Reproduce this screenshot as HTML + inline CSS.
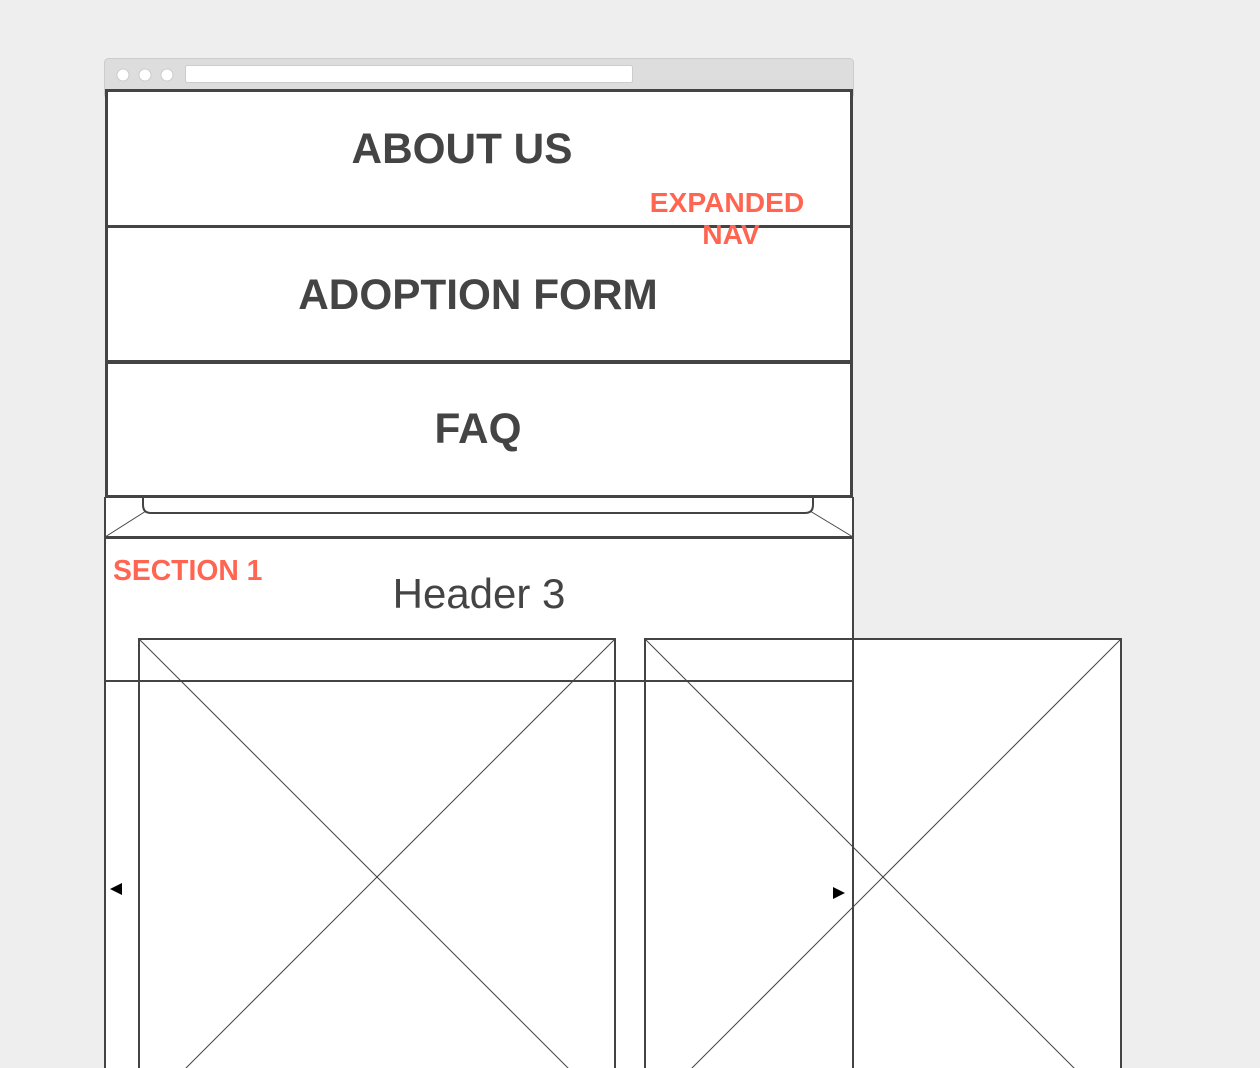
<!DOCTYPE html>
<html><head><meta charset="utf-8"><style>
html,body{margin:0;padding:0;background:#eeeeee;width:1260px;height:1068px;overflow:hidden}
svg{display:block}
text{font-family:"Liberation Sans",Arial,sans-serif}
</style></head><body>
<svg width="1260" height="1068" viewBox="0 0 1260 1068" xmlns="http://www.w3.org/2000/svg">
<rect width="1260" height="1068" fill="#eeeeee"/>
<!-- browser chrome -->
<rect x="104.5" y="58.5" width="749" height="40" rx="4" fill="#dddddd" stroke="#cccccc"/>
<circle cx="123" cy="75" r="6" fill="#fff" stroke="#cccccc"/>
<circle cx="145" cy="75" r="6" fill="#fff" stroke="#cccccc"/>
<circle cx="167" cy="75" r="6" fill="#fff" stroke="#cccccc"/>
<rect x="185.5" y="65.5" width="447" height="17" rx="2" fill="#fff" stroke="#cccccc"/>
<!-- page body -->
<rect x="105" y="89" width="748" height="990" fill="#fff"/>
<!-- images (white fill) -->
<rect x="139" y="639" width="476" height="480" fill="#fff"/>
<rect x="645" y="639" width="476" height="480" fill="#fff"/>
<!-- band with rounded tab -->
<path d="M143 497 V505 Q143 513 151 513 H805 Q813 513 813 505 V497" fill="none" stroke="#444" stroke-width="2"/>
<line x1="105" y1="537" x2="146" y2="511" stroke="#444" stroke-width="1"/>
<line x1="853" y1="537" x2="810" y2="511" stroke="#444" stroke-width="1"/>
<!-- nav boxes -->
<rect x="106.5" y="90.5" width="745" height="136" fill="none" stroke="#444" stroke-width="3"/>
<rect x="106.5" y="226.5" width="745" height="135" fill="none" stroke="#444" stroke-width="3"/>
<rect x="106.5" y="362.5" width="745" height="134" fill="none" stroke="#444" stroke-width="3"/>
<line x1="105" y1="497" x2="105" y2="1068" stroke="#444" stroke-width="2"/>
<line x1="853" y1="497" x2="853" y2="1068" stroke="#444" stroke-width="2"/>
<line x1="105" y1="537.5" x2="853" y2="537.5" stroke="#444" stroke-width="3"/>
<line x1="105" y1="681" x2="853" y2="681" stroke="#444" stroke-width="2"/>
<!-- image outlines -->
<rect x="139" y="639" width="476" height="480" fill="none" stroke="#444" stroke-width="2"/>
<line x1="139" y1="639" x2="615" y2="1115" stroke="#444" stroke-width="1"/>
<line x1="615" y1="639" x2="139" y2="1115" stroke="#444" stroke-width="1"/>
<rect x="645" y="639" width="476" height="480" fill="none" stroke="#444" stroke-width="2"/>
<line x1="645" y1="639" x2="1121" y2="1115" stroke="#444" stroke-width="1"/>
<line x1="1121" y1="639" x2="645" y2="1115" stroke="#444" stroke-width="1"/>
<!-- arrows -->
<polygon points="110,889 122,883 122,895" fill="#000"/>
<polygon points="845,893 833,887 833,899" fill="#000"/>
<!-- text -->
<text x="462" y="163" text-anchor="middle" font-size="42.3" font-weight="bold" fill="#444">ABOUT US</text>
<text x="478" y="309" text-anchor="middle" font-size="42.3" font-weight="bold" fill="#444">ADOPTION FORM</text>
<text x="478" y="443" text-anchor="middle" font-size="42.3" font-weight="bold" fill="#444">FAQ</text>
<text x="479" y="608" text-anchor="middle" font-size="42" fill="#444">Header 3</text>
<text x="727" y="212" text-anchor="middle" font-size="28.2" font-weight="bold" fill="#ff6550">EXPANDED</text>
<text x="731" y="244" text-anchor="middle" font-size="28.2" font-weight="bold" fill="#ff6550">NAV</text>
<text x="113" y="580" font-size="28.3" font-weight="bold" fill="#ff6550">SECTION 1</text>
</svg>
</body></html>
